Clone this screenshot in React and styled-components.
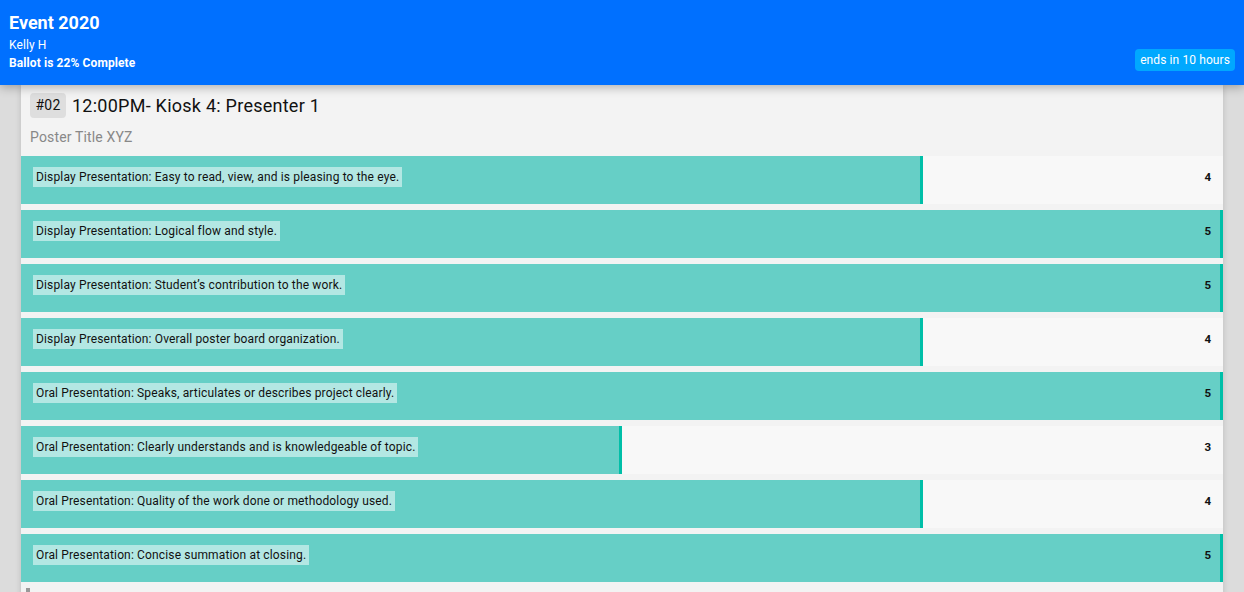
import React from 'react';
import styled, { createGlobalStyle } from 'styled-components';

const GlobalStyle = createGlobalStyle`
  html, body {
    margin: 0;
    padding: 0;
    background: #dcdcdc;
    font-family: Roboto, 'Liberation Sans', sans-serif;
    overflow: hidden;
  }
`;

const Header = styled.header`
  position: relative;
  z-index: 2;
  display: flex;
  justify-content: space-between;
  align-items: flex-start;
  height: 85px;
  box-sizing: border-box;
  padding: 12px 9px 14px 9px;
  background: #0070ff;
  color: #fff;
  box-shadow: 0 2px 10px rgba(0, 0, 0, 0.3);
`;

const HeaderInfo = styled.div`
  display: flex;
  flex-direction: column;
`;

const EventTitle = styled.div`
  font-size: 18px;
  font-weight: 700;
  line-height: 22px;
  margin-bottom: 2px;
`;

const HeaderLine = styled.div`
  font-size: 12px;
  line-height: 18px;
  letter-spacing: 0.1px;
  font-weight: ${(p) => (p.bold ? 700 : 400)};
`;

const Countdown = styled.div`
  align-self: flex-end;
  background: #00a8ff;
  border-radius: 4px;
  font-size: 12px;
  line-height: 22px;
  letter-spacing: 0.1px;
  padding: 0 5px;
`;

const Card = styled.main`
  margin: 0 21px;
  background: #f3f3f3;
  box-shadow: 0 0 6px rgba(0, 0, 0, 0.15);
  min-height: 520px;
`;

const CardHead = styled.div`
  padding: 7px 9px 0 9px;
`;

const TitleRow = styled.div`
  display: flex;
  align-items: center;
  gap: 6px;
  height: 26px;
`;

const Badge = styled.span`
  display: inline-flex;
  align-items: center;
  justify-content: center;
  width: 36px;
  height: 25px;
  border-radius: 4px;
  background: #dedede;
  font-size: 14px;
  letter-spacing: 0.2px;
  color: #111;
`;

const SlotTitle = styled.h2`
  margin: 0;
  font-size: 18px;
  font-weight: 400;
  letter-spacing: 0.25px;
  color: #111;
`;

const PosterTitle = styled.div`
  font-size: 14px;
  letter-spacing: 0.15px;
  color: #888;
  line-height: 18px;
  padding: 10px 0 10px;
`;

const Rows = styled.div`
  display: flex;
  flex-direction: column;
  gap: 6px;
`;

const Row = styled.div`
  position: relative;
  height: 48px;
  background: #f8f8f8;
`;

const Bar = styled.div`
  position: absolute;
  left: 0;
  top: 0;
  bottom: 0;
  box-sizing: border-box;
  background: #66cfc6;
  border-right: 3px solid #00bfa8;
`;

const RowContent = styled.div`
  position: relative;
  display: flex;
  justify-content: space-between;
  align-items: flex-start;
  height: 100%;
  box-sizing: border-box;
  padding: 11px 12px 0 12px;
`;

const Label = styled.span`
  background: rgba(255, 255, 255, 0.5);
  font-size: 12px;
  line-height: 19px;
  letter-spacing: 0.15px;
  padding: 1px 3px 0;
  color: #111;
`;

const Score = styled.span`
  font-size: 11.5px;
  font-weight: 700;
  line-height: 19px;
  color: #111;
  margin-top: 1px;
`;

const Footer = styled.div`
  margin-top: 6px;
  padding-left: 5px;
`;

const Handle = styled.div`
  width: 4px;
  height: 10px;
  background: #999;
`;

const criteria = [
  ['Display Presentation: Easy to read, view, and is pleasing to the eye.', 4],
  ['Display Presentation: Logical flow and style.', 5],
  ['Display Presentation: Student\u2019s contribution to the work.', 5],
  ['Display Presentation: Overall poster board organization.', 4],
  ['Oral Presentation: Speaks, articulates or describes project clearly.', 5],
  ['Oral Presentation: Clearly understands and is knowledgeable of topic.', 3],
  ['Oral Presentation: Quality of the work done or methodology used.', 4],
  ['Oral Presentation: Concise summation at closing.', 5],
];

const App = () => (
  <>
    <GlobalStyle />
    <Header>
      <HeaderInfo>
        <EventTitle>Event 2020</EventTitle>
        <HeaderLine>Kelly H</HeaderLine>
        <HeaderLine bold>Ballot is 22% Complete</HeaderLine>
      </HeaderInfo>
      <Countdown>ends in 10 hours</Countdown>
    </Header>
    <Card>
      <CardHead>
        <TitleRow>
          <Badge>#02</Badge>
          <SlotTitle>12:00PM- Kiosk 4: Presenter 1</SlotTitle>
        </TitleRow>
        <PosterTitle>Poster Title XYZ</PosterTitle>
      </CardHead>
      <Rows>
        {criteria.map(([label, score]) => (
          <Row key={label}>
            <Bar style={{ width: `${((score - 1) / 4) * 100}%` }} />
            <RowContent>
              <Label>{label}</Label>
              <Score>{score}</Score>
            </RowContent>
          </Row>
        ))}
      </Rows>
      <Footer>
        <Handle />
      </Footer>
    </Card>
  </>
);

export default App;
